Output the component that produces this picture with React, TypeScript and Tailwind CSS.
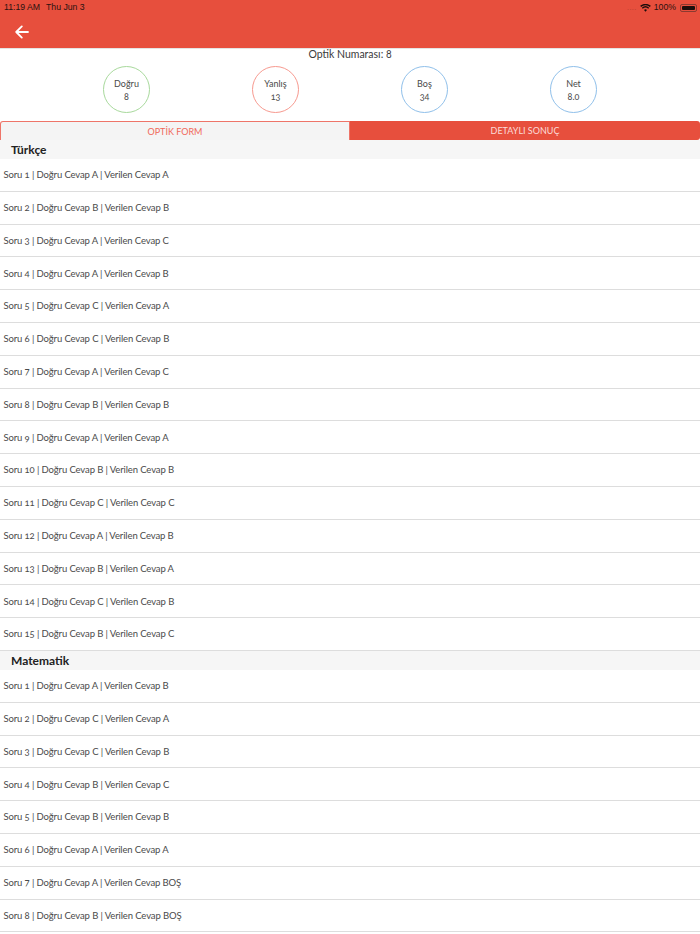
import React from "react";

const turkce = ["A|A","B|B","A|C","A|B","C|A","C|B","A|C","B|B","A|A","B|B","C|C","A|B","B|A","C|B","B|C"];
const mat = ["A|B","C|A","C|B","B|C","B|B","A|A","A|BOŞ","B|BOŞ"];

function Row({ n, v }: { n: number; v: string }) {
  const [d, g] = v.split("|");
  return (
    <div className="h-[32.8px] flex items-center pl-[3.5px] pt-[1px] border-b border-[#dddddd] text-[9.5px] text-[#4a4a4a] tracking-[-0.12px] oldstyle-nums shrink-0">
      {`Soru ${n} | Doğru Cevap ${d} | Verilen Cevap ${g}`}
    </div>
  );
}

function Stat({ label, value, color }: { label: string; value: string; color: string }) {
  return (
    <div className="flex justify-center">
      <div className={`w-[47px] h-[47px] rounded-full border flex flex-col items-center justify-center text-[9px] text-[#4a4a4a] leading-[13px] oldstyle-nums ${color}`}>
        <span>{label}</span>
        <span>{value}</span>
      </div>
    </div>
  );
}

function Section({ title, items }: { title: string; items: string[] }) {
  return (
    <div>
      <div className="h-[19px] bg-[#f6f6f6] flex items-center pl-[11px] pt-[1px] text-[12px] font-bold text-[#222222]">{title}</div>
      {items.map((v, i) => <Row key={i} n={i + 1} v={v} />)}
    </div>
  );
}

export default function App() {
  return (
    <div className="w-[700px] h-[934px] overflow-hidden bg-white font-['Lato','Liberation_Sans',sans-serif]">
      <div className="h-[49px] bg-[#e74f3d] border-b border-[#e4e4e4] flex flex-col">
        <div className="h-[15px] pt-[1px] flex items-center justify-between pl-[4px] pr-[3px] text-[8.7px] font-['Liberation_Sans',sans-serif] text-[#2a1210]">
          <div className="flex gap-[6px]"><span>11:19 AM</span><span>Thu Jun 3</span></div>
          <div className="flex items-center gap-[3px]">
            <span className="text-[7px] leading-none tracking-[0.5px] opacity-30">....</span>
            <svg width="11" height="8" viewBox="0 0 24 18" fill="#1c0d0b"><path d="M12 17.5 8.7 13.4a5 5 0 0 1 6.6 0zM5.9 10.8 3.7 8.3a12.5 12.5 0 0 1 16.6 0l-2.2 2.5a9 9 0 0 0-12.2 0zM2.2 6.6 0 4.2a18 18 0 0 1 24 0l-2.2 2.4a14.7 14.7 0 0 0-19.6 0z" /></svg>
            <span>100%</span>
            <div className="w-[17px] h-[8px] rounded-[2px] border border-[#8a3a30] p-[1px] flex ml-[1px]"><div className="flex-1 bg-[#1c0d0b] rounded-[1px]" /></div>
          </div>
        </div>
        <div className="pl-[15px] pt-[10px]">
          <svg width="14" height="14" viewBox="0 0 14 14" fill="none" stroke="#ffffff" strokeWidth="1.8" strokeLinecap="round" strokeLinejoin="round"><path d="M1.2 7H13M6.8 1.4 1.2 7l5.6 5.6" /></svg>
        </div>
      </div>

      <div className="h-[11px] flex items-center justify-center text-[10.5px] text-[#3a3a3a] oldstyle-nums">Optik Numarası: 8</div>

      <div className="grid grid-cols-4 px-[52px] mt-[6px]">
        <Stat label="Doğru" value="8" color="border-[#a8d99c]" />
        <Stat label="Yanlış" value="13" color="border-[#f79a90]" />
        <Stat label="Boş" value="34" color="border-[#90c0ea]" />
        <Stat label="Net" value="8.0" color="border-[#90c0ea]" />
      </div>

      <div className="flex h-[19px] mt-[8px] text-[9px]">
        <div className="w-[350px] pt-[1px] bg-[#f4f4f4] border border-b-0 border-[#ee7468] rounded-tl-[3px] flex items-center justify-center text-[#f0685a]">OPTİK FORM</div>
        <div className="w-[350px] pt-[1px] bg-[#e74f3d] rounded-r-[3px] flex items-center justify-center text-[#fbdcd8]">DETAYLI SONUÇ</div>
      </div>

      <Section title="Türkçe" items={turkce} />
      <Section title="Matematik" items={mat} />
    </div>
  );
}
